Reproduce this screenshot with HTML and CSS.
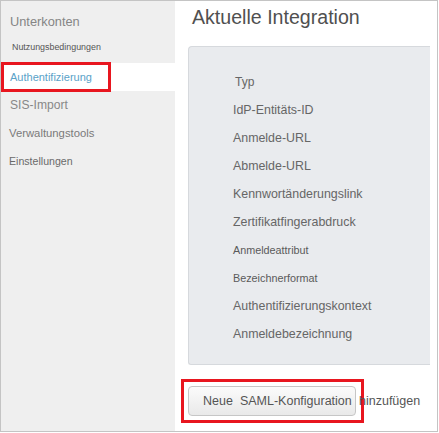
FILE: index.html
```html
<!DOCTYPE html>
<html lang="de">
<head>
<meta charset="utf-8">
<title>Aktuelle Integration</title>
<link rel="stylesheet" href="styles.css">
</head>
<body>
<div class="frame">
  <nav class="sidebar">
    <div class="nav-item nav-head">Unterkonten</div>
    <div class="nav-item nav-small">Nutzungsbedingungen</div>
    <div class="nav-item nav-active">Authentifizierung</div>
    <div class="nav-item nav-sis">SIS-Import</div>
    <div class="nav-item nav-tools">Verwaltungstools</div>
    <div class="nav-item nav-settings">Einstellungen</div>
  </nav>
  <main class="main">
    <h1 class="title">Aktuelle Integration</h1>
    <section class="panel">
      <div class="row row-typ">Typ</div>
      <div class="row">IdP-Entitäts-ID</div>
      <div class="row">Anmelde-URL</div>
      <div class="row">Abmelde-URL</div>
      <div class="row">Kennwortänderungslink</div>
      <div class="row">Zertifikatfingerabdruck</div>
      <div class="row row-small">Anmeldeattribut</div>
      <div class="row row-small">Bezeichnerformat</div>
      <div class="row">Authentifizierungskontext</div>
      <div class="row">Anmeldebezeichnung</div>
    </section>
    <div class="actions">
      <button class="btn" type="button"><span>Neue</span><span class="btn-word">SAML-Konfiguration</span></button>
      <span class="btn-tail">hinzufügen</span>
    </div>
  </main>
</div>
</body>
</html>
```

FILE: styles.css
```css
html, body {
  margin: 0;
  padding: 0;
  background: #ffffff;
}

body {
  font-family: "Liberation Sans", Arial, sans-serif;
}

.frame {
  box-sizing: border-box;
  width: 438px;
  height: 432px;
  border: 1px solid #c4c4c4;
  display: flex;
  background: #ffffff;
}

.sidebar {
  width: 174px;
  flex: none;
  background: #efefef;
  padding-top: 7px;
  display: flex;
  flex-direction: column;
}

.nav-item {
  height: 28px;
  line-height: 28px;
  padding-left: 8px;
  white-space: nowrap;
  color: #777777;
  font-size: 11.3px;
}

.nav-head {
  padding-left: 9px;
  font-size: 12.8px;
  color: #858585;
}

.nav-small {
  height: 27px;
  line-height: 22px;
  padding-left: 11px;
  font-size: 8.9px;
  color: #555555;
}

.nav-active {
  position: relative;
  background: #ffffff;
  color: #5aa2c8;
  font-size: 11px;
  padding-left: 9px;
}

.nav-active::after {
  content: "";
  position: absolute;
  left: 0;
  top: -1px;
  width: 110px;
  height: 30px;
  box-sizing: border-box;
  border: 3.5px solid #e8161f;
}

.nav-sis {
  padding-left: 9px;
  font-size: 12.1px;
  color: #888888;
}

.nav-tools {
  font-size: 11.3px;
  color: #7a7a7a;
}

.nav-settings {
  font-size: 10.6px;
  color: #6a6a6a;
}

.main {
  flex: 1;
  padding-left: 13px;
  padding-right: 7px;
}

.title {
  margin: 0;
  height: 45px;
  padding-left: 4px;
  font-size: 19.6px;
  font-weight: normal;
  line-height: 32px;
  color: #505050;
}

.panel {
  box-sizing: border-box;
  width: 242px;
  height: 319px;
  background: #e9ebee;
  border: 1px solid #d6d9dd;
  border-right: none;
  border-top-left-radius: 4px;
  border-bottom-left-radius: 3px;
  padding: 21px 0 0 44px;
}

.row {
  height: 28px;
  line-height: 28px;
  font-size: 12.4px;
  color: #666666;
  white-space: nowrap;
}

.row-typ {
  padding-left: 2px;
  font-size: 12px;
}

.row-small {
  font-size: 10.8px;
  color: #5a5a5a;
}

.actions {
  position: relative;
  display: flex;
  align-items: center;
  margin-top: 21px;
  width: 242px;
}

.actions::before {
  content: "";
  position: absolute;
  left: -7px;
  top: -7px;
  width: 183px;
  height: 44px;
  box-sizing: border-box;
  border: 3.5px solid #e8161f;
}

.btn {
  position: relative;
  box-sizing: border-box;
  width: 168px;
  height: 30px;
  padding: 0 0 0 14px;
  display: flex;
  align-items: center;
  border: 1px solid #c6c6c6;
  border-radius: 4px;
  background: linear-gradient(#fbfbfb, #e9e9e9);
  font-family: "Liberation Sans", Arial, sans-serif;
  font-size: 12.5px;
  color: #555555;
  white-space: nowrap;
}

.btn-word {
  margin-left: 7px;
}

.btn-tail {
  position: relative;
  margin-left: 3px;
  font-size: 12.5px;
  color: #555555;
  white-space: nowrap;
}
```
